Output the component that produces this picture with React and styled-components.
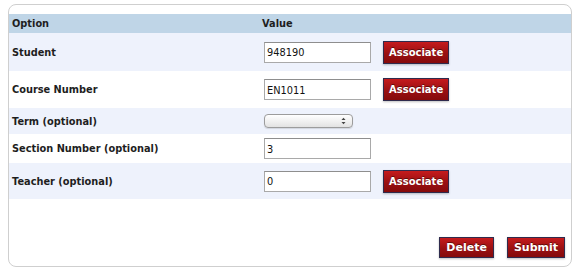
import React from "react";
import styled, { createGlobalStyle } from "styled-components";

const Global = createGlobalStyle`
  html, body { margin: 0; padding: 0; background: #fff; }
  body { font-family: "DejaVu Sans", Verdana, sans-serif; color: #222; }
`;

const Page = styled.div`
  padding: 4px 3px 0 8px;
`;

const Panel = styled.form`
  box-sizing: border-box;
  width: 564px;
  height: 263px;
  border: 1px solid #cfcfcf;
  border-radius: 8px;
  padding-top: 9px;
  display: flex;
  flex-direction: column;
  background: #fff;
  overflow: hidden;
`;

const Row = styled.div`
  display: grid;
  grid-template-columns: 250px 1fr;
  align-items: center;
  height: ${(p) => p.$h}px;
  background: ${(p) => (p.$header ? "#bfd5e7" : p.$alt ? "#eef2fc" : "#fff")};
`;

const Cell = styled.div`
  padding-left: 3px;
  display: flex;
  align-items: center;
  gap: 12px;
  font-size: 9.8px;
  font-weight: bold;
  color: #1e1e1e;
`;

const ValueCell = styled(Cell)`
  padding-left: 5px;
`;

const Input = styled.input`
  box-sizing: border-box;
  width: 107px;
  height: 21px;
  margin: 0;
  padding: 1px 2px 0;
  border: 1px solid #a9a9a9;
  border-top-color: #8e8e8e;
  font-family: "DejaVu Sans", Verdana, sans-serif;
  font-size: 9.8px;
  color: #111;
  background: #fff;
  outline: none;
`;

const Button = styled.button`
  box-sizing: border-box;
  margin: 0;
  height: ${(p) => (p.$big ? 21 : 23)}px;
  padding: 0 ${(p) => (p.$big ? 6 : 5)}px;
  border: 1px solid #2f2b4d;
  background: linear-gradient(#c51b1d, #9a1012 55%, #850a0b);
  color: #fff;
  font-family: "DejaVu Sans", Verdana, sans-serif;
  font-weight: bold;
  font-size: ${(p) => (p.$big ? 11 : 10)}px;
  text-shadow: 0 -1px 0 rgba(0, 0, 0, 0.45);
  box-shadow: 0 1px 2px rgba(0, 0, 0, 0.25);
  cursor: pointer;
`;

const SelectBox = styled.label`
  box-sizing: border-box;
  width: 89px;
  height: 14px;
  display: flex;
  align-items: center;
  justify-content: flex-end;
  padding-right: 6px;
  border: 1px solid #9c9c9c;
  border-radius: 4px;
  background: linear-gradient(#ffffff, #f1f1f1 50%, #e2e2e2);
  box-shadow: 0 1px 1px rgba(0, 0, 0, 0.12);
`;

const HiddenSelect = styled.select`
  appearance: none;
  flex: 1;
  height: 100%;
  border: 0;
  background: transparent;
  font-size: 9px;
  padding: 0;
  outline: none;
`;

const Footer = styled.div`
  flex: 1;
  display: flex;
  align-items: flex-end;
  justify-content: flex-end;
  gap: 13px;
  padding: 0 6px 8px 0;
`;

function Arrows() {
  return (
    <svg width="5" height="8" viewBox="0 0 5 8">
      <path d="M0.5 3 L2.5 0.8 L4.5 3 Z" fill="#444" />
      <path d="M0.5 5 L2.5 7.2 L4.5 5 Z" fill="#444" />
    </svg>
  );
}

const rows = [
  { label: "Student", value: "948190", assoc: true, h: 38, alt: true },
  { label: "Course Number", value: "EN1011", assoc: true, h: 37, alt: false },
  { label: "Term (optional)", select: true, h: 26, alt: true },
  { label: "Section Number (optional)", value: "3", h: 29, alt: false },
  { label: "Teacher (optional)", value: "0", assoc: true, h: 36, alt: true },
];

export default function App() {
  return (
    <Page>
      <Global />
      <Panel onSubmit={(e) => e.preventDefault()}>
        <Row $header $h={19}>
          <Cell>Option</Cell>
          <Cell>Value</Cell>
        </Row>
        {rows.map((r) => (
          <Row key={r.label} $h={r.h} $alt={r.alt}>
            <Cell>{r.label}</Cell>
            <ValueCell>
              {r.select ? (
                <SelectBox>
                  <HiddenSelect defaultValue="">
                    <option value=""></option>
                  </HiddenSelect>
                  <Arrows />
                </SelectBox>
              ) : (
                <Input defaultValue={r.value} />
              )}
              {r.assoc && <Button type="button">Associate</Button>}
            </ValueCell>
          </Row>
        ))}
        <Footer>
          <Button type="button" $big>Delete</Button>
          <Button type="submit" $big>Submit</Button>
        </Footer>
      </Panel>
    </Page>
  );
}
